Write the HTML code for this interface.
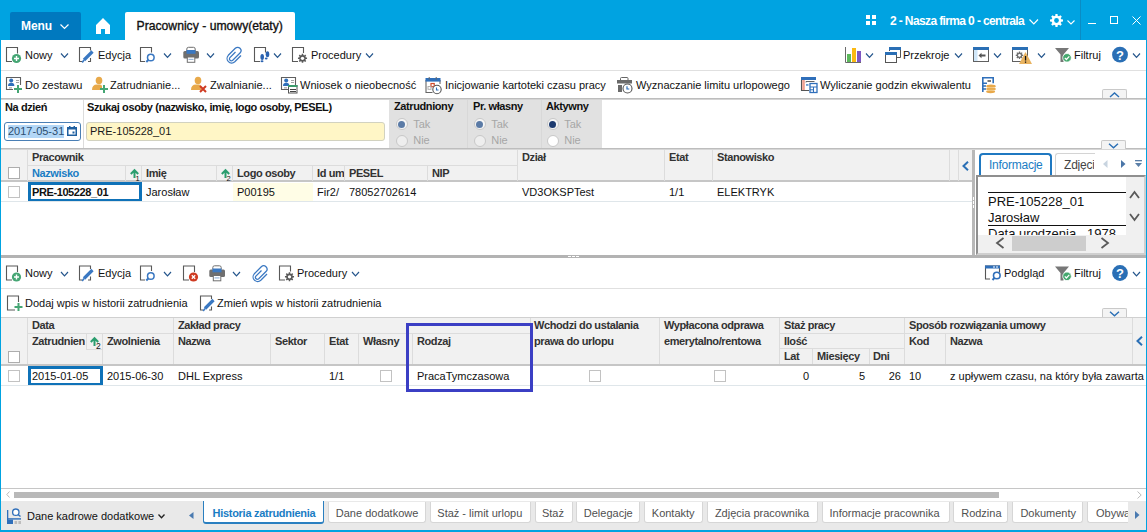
<!DOCTYPE html>
<html><head><meta charset="utf-8">
<style>
*{box-sizing:border-box;margin:0;padding:0}
html,body{width:1147px;height:532px;overflow:hidden;background:#fff}
body{position:relative;font-family:"Liberation Sans",sans-serif;font-size:11px;color:#111}
.a{position:absolute}
.t{position:absolute;white-space:nowrap;line-height:11px;font-size:11px}
.b{font-weight:bold;letter-spacing:-0.4px}
.bx{position:absolute}
svg{position:absolute;overflow:visible}
</style></head><body>
<!-- frame borders -->
<div class="a" style="left:0;top:0;width:1147px;height:40px;background:#00a3e1"></div>
<div class="a" style="left:0;top:40px;width:1px;height:492px;background:#00a3e1"></div>
<div class="a" style="left:1146px;top:40px;width:1px;height:492px;background:#00a3e1"></div>
<div class="a" style="left:0;top:530px;width:1147px;height:2px;background:#00a3e1"></div>

<!-- TOP BAR -->
<div class="a" style="left:10px;top:12px;width:71px;height:28px;background:#0079bf;border-radius:2px 2px 0 0"></div>
<span class="t b" style="left:21px;top:20px;color:#fff;font-size:12px;line-height:12px;letter-spacing:-0.1px">Menu</span>
<svg style="left:60px;top:24px" width="9" height="6"><path d="M0.5 0.5 L4.5 4.5 L8.5 0.5" fill="none" stroke="#fff" stroke-width="1.2"/></svg>
<svg style="left:96px;top:18px" width="14" height="16"><path d="M7 0 L14 7 L14 16 L9 16 L9 11 L5 11 L5 16 L0 16 L0 7 Z" fill="#fff"/></svg>
<div class="a" style="left:125px;top:12px;width:170px;height:28px;background:#fff;border-radius:2px 2px 0 0"></div>
<span class="t" style="left:136.5px;top:20px;color:#111;font-size:12.2px;line-height:12px;-webkit-text-stroke:0.35px #111">Pracownicy - umowy(etaty)</span>

<svg style="left:866px;top:15px" width="10" height="10"><rect x="0" y="0" width="4" height="4" fill="#fff"/><rect x="6" y="0" width="4" height="4" fill="#fff"/><rect x="0" y="6" width="4" height="4" fill="#fff"/><rect x="6" y="6" width="4" height="4" fill="#fff"/></svg>
<span class="t b" style="left:890px;top:15px;color:#fff;font-size:12px;line-height:12px;letter-spacing:-0.62px">2 - Nasza firma 0 - centrala</span>
<svg style="left:1029px;top:19px" width="10" height="6"><path d="M0.5 0.5 L4.8 4.8 L9 0.5" fill="none" stroke="#fff" stroke-width="1.2"/></svg>

<svg style="left:1067px;top:20px" width="8" height="5"><path d="M0.5 0.5 L4 4 L7.5 0.5" fill="none" stroke="#fff" stroke-width="1.1"/></svg>
<div class="a" style="left:1080px;top:0;width:1px;height:40px;background:#0a8cc4"></div>
<div class="a" style="left:1088px;top:23px;width:8px;height:1px;background:#fff"></div>
<div class="a" style="left:1110px;top:16px;width:8px;height:8px;border:1px solid #fff"></div>
<svg style="left:1132px;top:16px" width="9" height="9"><path d="M0.5 0.5 L8.5 8.5 M8.5 0.5 L0.5 8.5" stroke="#fff" stroke-width="1"/></svg>

<!-- TOOLBAR 1 -->
<div class="a" style="left:1px;top:70px;width:1145px;height:1px;background:#e0e0e0"></div>
<span class="t" style="left:25px;top:50px">Nowy</span>
<span class="t" style="left:98px;top:50px">Edycja</span>
<span class="t" style="left:311px;top:50px">Procedury</span>
<span class="t" style="left:903px;top:50px">Przekroje</span>
<span class="t" style="left:1074px;top:50px">Filtruj</span>

<!-- TOOLBAR 2 -->
<div class="a" style="left:1px;top:98px;width:1145px;height:1px;background:#bdbdbd"></div>
<div class="a" style="left:1px;top:99px;width:1145px;height:1px;background:#d4d4d4"></div>
<span class="t" style="left:25px;top:80px">Do zestawu</span>
<span class="t" style="left:110px;top:80px">Zatrudnianie...</span>
<span class="t" style="left:210px;top:80px">Zwalnianie...</span>
<span class="t" style="left:300px;top:80px">Wniosek o nieobecność</span>
<span class="t" style="left:445px;top:80px">Inicjowanie kartoteki czasu pracy</span>
<span class="t" style="left:636px;top:80px">Wyznaczanie limitu urlopowego</span>
<span class="t" style="left:820px;top:80px">Wyliczanie godzin ekwiwalentu</span>


<!-- FILTER PANEL -->
<div class="a" style="left:83px;top:100px;width:1px;height:48px;background:#dcdcdc"></div>
<span class="t b" style="left:5px;top:102px;color:#111">Na dzień</span>
<span class="t b" style="left:87px;top:102px;color:#111">Szukaj osoby (nazwisko, imię, logo osoby, PESEL)</span>
<div class="a" style="left:4px;top:122px;width:77px;height:19px;border:1px solid #4a7fb5;border-radius:3px;background:#fff"></div>
<div class="a" style="left:8px;top:125px;width:56px;height:13px;background:#b3d7f7"></div>
<span class="t" style="left:8px;top:126px;color:#2d4e70">2017-05-31</span>
<svg style="left:67px;top:126px" width="10" height="10"><rect x="0.75" y="1.75" width="8.5" height="7.5" fill="none" stroke="#1f5f9f" stroke-width="1.5"/><rect x="0" y="1" width="10" height="2.5" fill="#1f5f9f"/><rect x="2" y="0" width="1.5" height="2" fill="#1f5f9f"/><rect x="6.5" y="0" width="1.5" height="2" fill="#1f5f9f"/><rect x="5.5" y="5.5" width="2" height="2" fill="#1f5f9f"/></svg>
<div class="a" style="left:86px;top:122px;width:299px;height:19px;border:1px solid #d2d2c0;border-radius:3px;background:#fff6c6"></div>
<span class="t" style="left:90px;top:126px;color:#1a1a1a">PRE-105228_01</span>
<div class="a" style="left:389px;top:100px;width:213px;height:48px;background:#e1e1e1"></div>
<div class="a" style="left:467px;top:100px;width:1px;height:48px;background:#d8d8d8"></div>
<div class="a" style="left:541px;top:100px;width:1px;height:48px;background:#d8d8d8"></div>
<span class="t b" style="left:394px;top:101px;color:#111">Zatrudniony</span>
<span class="t b" style="left:473px;top:101px;color:#111">Pr. własny</span>
<span class="t b" style="left:546px;top:101px;color:#111">Aktywny</span>
<div class="a" style="left:395.5px;top:118px;width:12px;height:12px;border-radius:50%;border:1px solid #c8c8c8;background:#f6f6f6"></div><div class="a" style="left:398.0px;top:120.5px;width:7px;height:7px;border-radius:50%;background:#5b7ba6"></div><div class="a" style="left:395.5px;top:134.5px;width:12px;height:12px;border-radius:50%;border:1px solid #c8c8c8;background:#eeeeee"></div><span class="t" style="left:413.2px;top:118.5px;color:#a6a6a6">Tak</span><span class="t" style="left:413.2px;top:135px;color:#a6a6a6">Nie</span>
<div class="a" style="left:473.5px;top:118px;width:12px;height:12px;border-radius:50%;border:1px solid #c8c8c8;background:#f6f6f6"></div><div class="a" style="left:476.0px;top:120.5px;width:7px;height:7px;border-radius:50%;background:#5b7ba6"></div><div class="a" style="left:473.5px;top:134.5px;width:12px;height:12px;border-radius:50%;border:1px solid #c8c8c8;background:#eeeeee"></div><span class="t" style="left:491.2px;top:118.5px;color:#a6a6a6">Tak</span><span class="t" style="left:491.2px;top:135px;color:#a6a6a6">Nie</span>
<div class="a" style="left:546.5px;top:118px;width:12px;height:12px;border-radius:50%;border:1px solid #c8c8c8;background:#f6f6f6"></div><div class="a" style="left:549.0px;top:120.5px;width:7px;height:7px;border-radius:50%;background:#1d3b70"></div><div class="a" style="left:546.5px;top:134.5px;width:12px;height:12px;border-radius:50%;border:1px solid #c8c8c8;background:#fff"></div><span class="t" style="left:564.2px;top:118.5px;color:#a6a6a6">Tak</span><span class="t" style="left:564.2px;top:135px;color:#a6a6a6">Nie</span>
<div class="a" style="left:1px;top:148px;width:1145px;height:1px;background:#bdbdbd"></div>
<div class="a" style="left:1px;top:149px;width:1145px;height:1px;background:#d6d6d6"></div>

<!-- UPPER GRID HEADER -->
<div class="a" style="left:1px;top:150px;width:971px;height:30px;background:#f1f1f1"></div>
<div class="a" style="left:1px;top:180px;width:971px;height:2px;background:#c6c6c6"></div>
<div class="a" style="left:27px;top:165px;width:490px;height:1px;background:#dcdcdc"></div>
<div class="a" style="left:27px;top:150px;width:1px;height:31px;background:#dcdcdc"></div><div class="a" style="left:125px;top:166px;width:1px;height:15px;background:#dcdcdc"></div><div class="a" style="left:141px;top:166px;width:1px;height:15px;background:#dcdcdc"></div><div class="a" style="left:216px;top:166px;width:1px;height:15px;background:#dcdcdc"></div><div class="a" style="left:232px;top:166px;width:1px;height:15px;background:#dcdcdc"></div><div class="a" style="left:312px;top:166px;width:1px;height:15px;background:#dcdcdc"></div><div class="a" style="left:344px;top:166px;width:1px;height:15px;background:#dcdcdc"></div><div class="a" style="left:427px;top:166px;width:1px;height:15px;background:#dcdcdc"></div><div class="a" style="left:517px;top:150px;width:1px;height:31px;background:#dcdcdc"></div><div class="a" style="left:664px;top:150px;width:1px;height:31px;background:#dcdcdc"></div><div class="a" style="left:712px;top:150px;width:1px;height:31px;background:#dcdcdc"></div><div class="a" style="left:949px;top:150px;width:1px;height:31px;background:#dcdcdc"></div><div class="a" style="left:958px;top:150px;width:1px;height:31px;background:#dcdcdc"></div>
<div class="a" style="left:8px;top:167px;width:12px;height:12px;border:1px solid #adadad;background:#fff"></div>
<span class="t b" style="left:32px;top:152px;color:#333">Pracownik</span>
<span class="t b" style="left:32px;top:168px;color:#1a7dc4">Nazwisko</span>
<span class="t b" style="left:146px;top:168px;color:#333">Imię</span>
<span class="t b" style="left:237px;top:168px;color:#333">Logo osoby</span>
<span class="t b" style="left:317px;top:168px;color:#333;width:27px;overflow:hidden">Id umowy</span>
<span class="t b" style="left:349px;top:168px;color:#333">PESEL</span>
<span class="t b" style="left:432px;top:168px;color:#333">NIP</span>
<span class="t b" style="left:522px;top:152px;color:#333">Dział</span>
<span class="t b" style="left:669px;top:152px;color:#333">Etat</span>
<span class="t b" style="left:717px;top:152px;color:#333">Stanowisko</span>
<svg style="left:130px;top:169px" width="9" height="9"><path d="M4.5 9 V1.5 M0.8 5 L4.5 1.2 L8.2 5" fill="none" stroke="#2a9d6e" stroke-width="2"/></svg>
<span class="t" style="left:135.5px;top:175px;font-size:7.5px;line-height:7px;color:#111">1</span>
<svg style="left:221px;top:169px" width="9" height="9"><path d="M4.5 9 V1.5 M0.8 5 L4.5 1.2 L8.2 5" fill="none" stroke="#2a9d6e" stroke-width="2"/></svg>
<span class="t" style="left:226.5px;top:175px;font-size:7.5px;line-height:7px;color:#111">2</span>
<svg style="left:962px;top:161px" width="7" height="10"><path d="M6 0.8 L1.5 5 L6 9.2" fill="none" stroke="#2a6fb5" stroke-width="2"/></svg>

<!-- UPPER GRID ROW -->
<div class="a" style="left:233px;top:183px;width:80px;height:18px;background:#fffde6"></div>
<div class="a" style="left:1px;top:201px;width:971px;height:1px;background:#dfe6ea"></div>
<div class="a" style="left:8px;top:186px;width:12px;height:12px;border:1px solid #c2c2c2;background:#fff"></div>
<div class="a" style="left:28px;top:182px;width:114px;height:19px;border:3px solid #0f72b8;border-bottom-width:2px"></div>
<span class="t b" style="left:32px;top:187px;color:#111">PRE-105228_01</span>
<span class="t" style="left:146px;top:187px">Jarosław</span>
<span class="t" style="left:237px;top:187px">P00195</span>
<span class="t" style="left:317px;top:187px">Fir2/</span>
<span class="t" style="left:349px;top:187px">78052702614</span>
<span class="t" style="left:522px;top:187px">VD3OKSPTest</span>
<span class="t" style="left:669px;top:187px">1/1</span>
<span class="t" style="left:717px;top:187px">ELEKTRYK</span>

<!-- splitter vertical + right panel -->
<div class="a" style="left:972px;top:150px;width:3px;height:105px;background:#b8b8b8"></div><div class="a" style="left:973px;top:197px;width:1px;height:3px;background:#fff"></div><div class="a" style="left:973px;top:201px;width:1px;height:3px;background:#fff"></div><div class="a" style="left:973px;top:205px;width:1px;height:3px;background:#fff"></div>


<!-- RIGHT PANEL -->
<div class="a" style="left:976px;top:150px;width:170px;height:105px;background:#fff"></div>
<div class="a" style="left:979px;top:153px;width:73px;height:23px;border:2px solid #1f78c1;border-bottom:none;border-radius:4px 4px 0 0;background:#fff"></div>
<span class="t" style="left:989px;top:159px;color:#1a7dc4;font-size:12px;line-height:12px;letter-spacing:-0.25px">Informacje</span>
<div class="a" style="left:1055px;top:153px;width:40px;height:22px;border:1px solid #d4d4d4;border-bottom:none;border-right:none;border-radius:3px 0 0 0;background:#fff;overflow:hidden"></div>
<span class="t" style="left:1064px;top:159px;color:#444;font-size:12px;line-height:12px;width:30px;overflow:hidden;letter-spacing:-0.2px">Zdjęcia</span>
<svg style="left:1103px;top:160px" width="5" height="8"><path d="M4.5 0 L0 4 L4.5 8 Z" fill="#c8d4e0"/></svg>
<svg style="left:1120.5px;top:160px" width="5" height="8"><path d="M0 0 L4.5 4 L0 8 Z" fill="#4a76a8"/></svg>
<svg style="left:1135px;top:160px" width="8" height="8"><rect x="0" y="0" width="7" height="1.3" fill="#5a7fa8"/><path d="M0 3 L7 3 L3.5 7 Z" fill="#5a7fa8"/></svg>
<div class="a" style="left:976px;top:175px;width:170px;height:80px;border-top:2px solid #8f8f8f;border-left:2px solid #8f8f8f;border-right:2px solid #cfcfcf;border-bottom:2px solid #cfcfcf;background:#fff;overflow:hidden">
  <div class="a" style="left:10px;top:15px;width:138px;height:1px;background:#111"></div>
  <span class="t" style="left:10px;top:18px;font-size:13px;line-height:13px;color:#111">PRE-105228_01</span>
  <span class="t" style="left:10px;top:34px;font-size:13px;line-height:13px;color:#111">Jarosław</span>
  <div class="a" style="left:10px;top:48px;width:138px;height:1px;background:#111"></div>
  <span class="t" style="left:10px;top:50px;font-size:13px;line-height:13px;color:#111">Data urodzenia&nbsp;&nbsp;&nbsp;1978</span>
  <div class="a" style="left:148px;top:0;width:18px;height:58px;background:#f0f0f0"></div>
  <div class="a" style="left:0;top:58px;width:166px;height:18px;background:#f0f0f0"></div>
  <div class="a" style="left:34px;top:59px;width:74px;height:15px;background:#cdcdcd"></div>
</div>
<svg style="left:1129px;top:190px" width="11" height="9"><path d="M1 8 L5.5 2 L10 8" fill="none" stroke="#5a5a5a" stroke-width="1.8"/></svg>
<svg style="left:1129px;top:213px" width="11" height="9"><path d="M1 1 L5.5 7 L10 1" fill="none" stroke="#5a5a5a" stroke-width="1.8"/></svg>
<svg style="left:995px;top:237px" width="10" height="12"><path d="M8.5 1 L2 6 L8.5 11" fill="none" stroke="#5a5a5a" stroke-width="1.8"/></svg>
<svg style="left:1100px;top:237px" width="10" height="12"><path d="M1.5 1 L8 6 L1.5 11" fill="none" stroke="#5a5a5a" stroke-width="1.8"/></svg>
<div class="a" style="left:1101px;top:140px;width:25px;height:9px;border:1px solid #c9c9c9;border-bottom:none;border-radius:2px 2px 0 0;background:#f4f4f4"></div>
<svg style="left:1108px;top:143px" width="11" height="6"><path d="M1 0.8 L5.5 4.8 L10 0.8" fill="none" stroke="#2a6fb5" stroke-width="1.4"/></svg>
<div class="a" style="left:1102px;top:89px;width:25px;height:9px;border:1px solid #c9c9c9;border-bottom:none;border-radius:2px 2px 0 0;background:#f4f4f4"></div>
<svg style="left:1109px;top:92px" width="11" height="6"><path d="M1 5 L5.5 1 L10 5" fill="none" stroke="#2a6fb5" stroke-width="1.4"/></svg>

<!-- HORIZONTAL SPLITTER -->
<div class="a" style="left:1px;top:255px;width:1145px;height:3px;background:#b3b3b3"></div>
<div class="a" style="left:568px;top:256px;width:3px;height:1px;background:#fff"></div>
<div class="a" style="left:572px;top:256px;width:3px;height:1px;background:#fff"></div>
<div class="a" style="left:576px;top:256px;width:3px;height:1px;background:#fff"></div>

<!-- LOWER TOOLBAR 1 -->
<div class="a" style="left:1px;top:288px;width:1145px;height:1px;background:#e0e0e0"></div>
<span class="t" style="left:25px;top:268px">Nowy</span>
<span class="t" style="left:98px;top:268px">Edycja</span>
<span class="t" style="left:297px;top:268px">Procedury</span>
<span class="t" style="left:1004px;top:268px">Podgląd</span>
<span class="t" style="left:1074px;top:268px">Filtruj</span>

<!-- LOWER TOOLBAR 2 -->
<span class="t" style="left:25px;top:298px">Dodaj wpis w historii zatrudnienia</span>
<span class="t" style="left:217px;top:298px">Zmień wpis w historii zatrudnienia</span>
<div class="a" style="left:1102px;top:308px;width:25px;height:9px;border:1px solid #c9c9c9;border-bottom:none;border-radius:2px 2px 0 0;background:#f4f4f4"></div>
<svg style="left:1109px;top:311px" width="11" height="6"><path d="M1 0.8 L5.5 4.8 L10 0.8" fill="none" stroke="#2a6fb5" stroke-width="1.4"/></svg>

<!-- LOWER GRID HEADER -->
<div class="a" style="left:1px;top:317px;width:1145px;height:1px;background:#d0d0d0"></div>
<div class="a" style="left:1px;top:318px;width:1145px;height:46px;background:#f1f1f1"></div>
<div class="a" style="left:1px;top:364px;width:1145px;height:2px;background:#c6c6c6"></div>
<div class="a" style="left:27px;top:333px;width:503px;height:1px;background:#dcdcdc"></div><div class="a" style="left:779px;top:333px;width:353px;height:1px;background:#dcdcdc"></div><div class="a" style="left:779px;top:348px;width:125px;height:1px;background:#dcdcdc"></div><div class="a" style="left:27px;top:318px;width:1px;height:46px;background:#dcdcdc"></div><div class="a" style="left:102px;top:334px;width:1px;height:30px;background:#dcdcdc"></div><div class="a" style="left:173px;top:318px;width:1px;height:46px;background:#dcdcdc"></div><div class="a" style="left:270px;top:334px;width:1px;height:30px;background:#dcdcdc"></div><div class="a" style="left:324px;top:334px;width:1px;height:30px;background:#dcdcdc"></div><div class="a" style="left:358px;top:334px;width:1px;height:30px;background:#dcdcdc"></div><div class="a" style="left:412px;top:334px;width:1px;height:30px;background:#dcdcdc"></div><div class="a" style="left:530px;top:318px;width:1px;height:46px;background:#dcdcdc"></div><div class="a" style="left:659px;top:318px;width:1px;height:46px;background:#dcdcdc"></div><div class="a" style="left:779px;top:318px;width:1px;height:46px;background:#dcdcdc"></div><div class="a" style="left:812px;top:349px;width:1px;height:15px;background:#dcdcdc"></div><div class="a" style="left:869px;top:349px;width:1px;height:15px;background:#dcdcdc"></div><div class="a" style="left:904px;top:318px;width:1px;height:46px;background:#dcdcdc"></div><div class="a" style="left:945px;top:334px;width:1px;height:30px;background:#dcdcdc"></div><div class="a" style="left:1132px;top:318px;width:1px;height:46px;background:#dcdcdc"></div>
<div class="a" style="left:86px;top:334px;width:1px;height:15px;background:#dcdcdc"></div>
<div class="a" style="left:86px;top:349px;width:16px;height:1px;background:#dcdcdc"></div>
<div class="a" style="left:8px;top:351px;width:12px;height:12px;border:1px solid #adadad;background:#fff"></div>
<span class="t b" style="left:32px;top:320px;color:#333">Data</span>
<span class="t b" style="left:178px;top:320px;color:#333">Zakład pracy</span>
<span class="t b" style="left:534px;top:320px;color:#333">Wchodzi do ustalania</span>
<span class="t b" style="left:664px;top:320px;color:#333">Wypłacona odprawa</span>
<span class="t b" style="left:784px;top:320px;color:#333">Staż pracy</span>
<span class="t b" style="left:909px;top:320px;color:#333">Sposób rozwiązania umowy</span>
<span class="t b" style="left:32px;top:336px;color:#333;width:53px;overflow:hidden">Zatrudnienia</span>
<span class="t b" style="left:107px;top:336px;color:#333">Zwolnienia</span>
<span class="t b" style="left:178px;top:336px;color:#333">Nazwa</span>
<span class="t b" style="left:275px;top:336px;color:#333">Sektor</span>
<span class="t b" style="left:329px;top:336px;color:#333">Etat</span>
<span class="t b" style="left:363px;top:336px;color:#333">Własny</span>
<span class="t b" style="left:417px;top:336px;color:#333">Rodzaj</span>
<span class="t b" style="left:534px;top:336px;color:#333">prawa do urlopu</span>
<span class="t b" style="left:664px;top:336px;color:#333">emerytalno/rentowa</span>
<span class="t b" style="left:784px;top:336px;color:#333">Ilość</span>
<span class="t b" style="left:909px;top:336px;color:#333">Kod</span>
<span class="t b" style="left:950px;top:336px;color:#333">Nazwa</span>
<span class="t b" style="left:784px;top:351px;color:#333">Lat</span>
<span class="t b" style="left:817px;top:351px;color:#333">Miesięcy</span>
<span class="t b" style="left:873px;top:351px;color:#333">Dni</span>
<svg style="left:90px;top:337px" width="9" height="9"><path d="M4.5 9 V1.5 M0.8 5 L4.5 1.2 L8.2 5" fill="none" stroke="#2a9d6e" stroke-width="2"/></svg>
<span class="t" style="left:96px;top:342px;font-size:8.5px;line-height:8px;color:#111">2</span>
<svg style="left:1136px;top:336px" width="7" height="10"><path d="M6 0.8 L1.5 5 L6 9.2" fill="none" stroke="#2a6fb5" stroke-width="2"/></svg>

<!-- LOWER GRID ROW -->
<div class="a" style="left:1px;top:385px;width:1145px;height:1px;background:#dfe6ea"></div>
<div class="a" style="left:8px;top:370px;width:12px;height:12px;border:1px solid #c2c2c2;background:#fff"></div>
<div class="a" style="left:28px;top:366px;width:75px;height:19px;border:3px solid #0f72b8;border-bottom-width:2px"></div>
<span class="t" style="left:32px;top:371px">2015-01-05</span>
<span class="t" style="left:107px;top:371px">2015-06-30</span>
<span class="t" style="left:178px;top:371px">DHL Express</span>
<span class="t" style="left:329px;top:371px">1/1</span>
<div class="a" style="left:380px;top:370px;width:12px;height:12px;border:1px solid #c2c2c2;background:#fff"></div>
<span class="t" style="left:417px;top:371px">PracaTymczasowa</span>
<div class="a" style="left:589px;top:370px;width:12px;height:12px;border:1px solid #c2c2c2;background:#fff"></div>
<div class="a" style="left:714px;top:370px;width:12px;height:12px;border:1px solid #c2c2c2;background:#fff"></div>
<span class="t" style="left:770px;top:371px;width:39px;text-align:right">0</span>
<span class="t" style="left:826px;top:371px;width:39px;text-align:right">5</span>
<span class="t" style="left:861px;top:371px;width:40px;text-align:right">26</span>
<span class="t" style="left:909px;top:371px">10</span>
<span class="t" style="left:950px;top:371px">z upływem czasu, na który była zawarta</span>

<!-- annotation box -->
<div class="a" style="left:406px;top:323px;width:127px;height:69px;border:3px solid #3b3fc4"></div>

<!-- SCROLLBAR -->
<div class="a" style="left:1px;top:488px;width:1145px;height:1px;background:#c6c6c6"></div>
<div class="a" style="left:1px;top:489px;width:1145px;height:12px;background:#fff"></div>
<div class="a" style="left:14px;top:492px;width:985px;height:6px;background:#b9b9b9"></div>
<svg style="left:6px;top:491px" width="4" height="7"><path d="M3.5 0.5 L0.8 3.5 L3.5 6.5" fill="none" stroke="#bbb" stroke-width="1"/></svg>
<svg style="left:1137px;top:491px" width="5" height="8"><path d="M0.5 0.5 L4.2 4 L0.5 7.5" fill="none" stroke="#bbb" stroke-width="1"/></svg>

<!-- BOTTOM TAB BAR -->
<div class="a" style="left:1px;top:501px;width:1145px;height:29px;background:#e9e9e9"></div>
<span class="t" style="left:27px;top:511px;color:#111">Dane kadrowe dodatkowe</span>
<svg style="left:158px;top:514px" width="7" height="5"><path d="M0.5 0.5 L3.5 3.8 L6.5 0.5" fill="none" stroke="#222" stroke-width="1.3"/></svg>
<svg style="left:189px;top:512px" width="5" height="7"><path d="M4.5 0 L0 3.5 L4.5 7 Z" fill="#4a7ab0"/></svg>
<div class="a" style="left:203px;top:501px;width:121px;height:23px;background:#fff;border:1px solid #2a7fc0;border-top:none;border-bottom:2px solid #2a7fc0;border-radius:0 0 3px 3px"></div>
<span class="t b" style="left:212.5px;top:508px;color:#1a7dc4;letter-spacing:-0.28px">Historia zatrudnienia</span>
<div class="a" style="left:328px;top:502px;width:98px;height:21px;background:#fff;border:1px solid #d6d6d6;border-top:none;border-radius:0 0 3px 3px"></div><span class="t" style="left:335.8px;top:508px;color:#505050">Dane dodatkowe</span>
<div class="a" style="left:430px;top:502px;width:101px;height:21px;background:#fff;border:1px solid #d6d6d6;border-top:none;border-radius:0 0 3px 3px"></div><span class="t" style="left:437.3px;top:508px;color:#505050">Staż - limit urlopu</span>
<div class="a" style="left:535px;top:502px;width:38px;height:21px;background:#fff;border:1px solid #d6d6d6;border-top:none;border-radius:0 0 3px 3px"></div><span class="t" style="left:541.9px;top:508px;color:#505050">Staż</span>
<div class="a" style="left:576px;top:502px;width:64px;height:21px;background:#fff;border:1px solid #d6d6d6;border-top:none;border-radius:0 0 3px 3px"></div><span class="t" style="left:583.8px;top:508px;color:#505050">Delegacje</span>
<div class="a" style="left:644px;top:502px;width:59px;height:21px;background:#fff;border:1px solid #d6d6d6;border-top:none;border-radius:0 0 3px 3px"></div><span class="t" style="left:651.8px;top:508px;color:#505050">Kontakty</span>
<div class="a" style="left:707px;top:502px;width:111px;height:21px;background:#fff;border:1px solid #d6d6d6;border-top:none;border-radius:0 0 3px 3px"></div><span class="t" style="left:714.9px;top:508px;color:#505050">Zdjęcia pracownika</span>
<div class="a" style="left:822px;top:502px;width:128px;height:21px;background:#fff;border:1px solid #d6d6d6;border-top:none;border-radius:0 0 3px 3px"></div><span class="t" style="left:829.5px;top:508px;color:#505050">Informacje pracownika</span>
<div class="a" style="left:953px;top:502px;width:55px;height:21px;background:#fff;border:1px solid #d6d6d6;border-top:none;border-radius:0 0 3px 3px"></div><span class="t" style="left:961.2px;top:508px;color:#505050">Rodzina</span>
<div class="a" style="left:1012px;top:502px;width:71px;height:21px;background:#fff;border:1px solid #d6d6d6;border-top:none;border-radius:0 0 3px 3px"></div><span class="t" style="left:1020.4px;top:508px;color:#505050">Dokumenty</span>

<div class="a" style="left:1087px;top:502px;width:41px;height:21px;background:#fff;border:1px solid #d6d6d6;border-top:none;border-right:none;border-radius:0 0 0 3px;overflow:hidden"><span class="t" style="left:8px;top:6px;color:#505050">Obywatelstwo</span></div>
<div class="a" style="left:1128px;top:501px;width:18px;height:29px;background:#e9e9e9"></div>
<svg style="left:1135px;top:511px" width="5" height="8"><path d="M0 0 L4.5 4 L0 8 Z" fill="#4a7ab0"/></svg>

<!-- ICONS --><svg style="left:0;top:0;pointer-events:none" width="1147" height="532" viewBox="0 0 1147 532"><path d="M12 61.5 H6.5 V47.5 H17.5 V53.5" fill="none" stroke="#595959" stroke-width="1.1"/><circle cx="16.5" cy="58.5" r="4.6" fill="#45a674"/><path d="M16.5 56 V61 M14 58.5 H19" stroke="#fff" stroke-width="1.4"/><path d="M61 53.5 L64.5 57.5 L68 53.5" fill="none" stroke="#24558c" stroke-width="1.15"/><path d="M82 61.5 H79.5 V47.5 H90.5 V50.5 M90.5 58 V61.5 H88" fill="none" stroke="#595959" stroke-width="1.1"/><path d="M84 60 L92.5 51.5" stroke="#3a78c2" stroke-width="3.2"/><path d="M82.2 62.5 L84 60" stroke="#3a78c2" stroke-width="1.6"/><path d="M145 61.5 H140.5 V47.5 H151.5 V52.5" fill="none" stroke="#595959" stroke-width="1.1"/><circle cx="150.8" cy="57.5" r="3.3" fill="#fff" stroke="#3a78c2" stroke-width="1.5"/><path d="M148.5 59.8 L146.3 62" stroke="#3a78c2" stroke-width="2"/><path d="M164 53.5 L167.5 57.5 L171 53.5" fill="none" stroke="#24558c" stroke-width="1.15"/><rect x="183.3" y="51" width="15.7" height="7.5" rx="1.5" fill="#6f6f6f"/><path d="M186.8 51 V49 Q186.8 47.3 188.5 47.3 H193.5 Q195.2 47.3 195.2 49 V51" fill="#fff" stroke="#6f6f6f" stroke-width="1"/><rect x="186.5" y="50" width="9" height="3.8" fill="#3a78c2"/><rect x="187.3" y="57" width="7.5" height="5.3" fill="#fff" stroke="#6f6f6f" stroke-width="1"/><rect x="188.5" y="58.8" width="5" height="1.2" fill="#9ab8dc"/><path d="M207 53.5 L210.5 57.5 L214 53.5" fill="none" stroke="#24558c" stroke-width="1.15"/><path d="M235.5 52.0 L229.7 57.8 A2 2 0 0 0 232.5 60.5 L240.0 53.0 A3.3 3.3 0 0 0 235.3 48.3 L228.3 55.3 A4.6 4.6 0 0 0 234.8 61.8 L241.0 55.5" fill="none" stroke="#3a78c2" stroke-width="1.25"/><path d="M260 61.5 H254.5 V47.5 H265.5 V52.5" fill="none" stroke="#595959" stroke-width="1.1"/><ellipse cx="262.2" cy="57" rx="1.8" ry="3" fill="#2a62b0"/><ellipse cx="262" cy="61.3" rx="1.5" ry="1" fill="#2a62b0"/><ellipse cx="267.5" cy="54.3" rx="1.8" ry="3" fill="#2a62b0"/><ellipse cx="266.2" cy="58.6" rx="1.4" ry="1" fill="#2a62b0"/><path d="M274 53.5 L277.5 57.5 L281 53.5" fill="none" stroke="#24558c" stroke-width="1.15"/><path d="M298 61.5 H292.5 V47.5 H303.5 V53" fill="none" stroke="#595959" stroke-width="1.1"/><polygon points="305.80,57.48 307.04,57.54 307.04,59.06 305.80,59.12 305.42,60.06 306.24,60.97 305.17,62.04 304.26,61.22 303.32,61.60 303.26,62.84 301.74,62.84 301.68,61.60 300.74,61.22 299.83,62.04 298.76,60.97 299.58,60.06 299.20,59.12 297.96,59.06 297.96,57.54 299.20,57.48 299.58,56.54 298.76,55.63 299.83,54.56 300.74,55.38 301.68,55.00 301.74,53.76 303.26,53.76 303.32,55.00 304.26,55.38 305.17,54.56 306.24,55.63 305.42,56.54" fill="#595959"/><circle cx="302.5" cy="58.3" r="1.66" fill="#fff"/><path d="M366 53.5 L369.5 57.5 L373 53.5" fill="none" stroke="#24558c" stroke-width="1.15"/><path d="M845.5 47 V62.5 H861" fill="none" stroke="#6a6a6a" stroke-width="1"/><rect x="847" y="54" width="4" height="8" fill="#5cb85c"/><rect x="852" y="48" width="4" height="14" fill="#fbb913"/><rect x="857" y="51" width="4" height="11" fill="#7e57c2"/><path d="M866 53.5 L869.5 57.5 L873 53.5" fill="none" stroke="#24558c" stroke-width="1.15"/><path d="M889.5 51 V47.5 H900.5 V57.5 H897" fill="none" stroke="#555" stroke-width="1"/><rect x="889" y="47" width="12" height="3" fill="#2a6fb5"/><rect x="885.5" y="52.5" width="11" height="10" fill="#fff" stroke="#555" stroke-width="1"/><rect x="885" y="52" width="12" height="3" fill="#2a6fb5"/><path d="M955 53.5 L958.5 57.5 L962 53.5" fill="none" stroke="#24558c" stroke-width="1.15"/><rect x="973.5" y="47.5" width="15" height="14" fill="#fff" stroke="#606060" stroke-width="1"/><rect x="974" y="50" width="3.5" height="11" fill="#cfe6f8"/><rect x="973" y="47" width="16" height="3" fill="#2a6fb5"/><path d="M978.5 55.5 L981.5 52.8 V54.6 H985.5 V56.4 H981.5 V58.2 Z" fill="#555"/><path d="M994 53.5 L997.5 57.5 L1001 53.5" fill="none" stroke="#24558c" stroke-width="1.15"/><rect x="1012.5" y="47.5" width="15" height="14" fill="#fff" stroke="#606060" stroke-width="1"/><rect x="1012" y="47" width="16" height="3" fill="#2a6fb5"/><polygon points="1022.23,54.62 1023.25,54.68 1023.25,55.92 1022.23,55.98 1021.91,56.75 1022.59,57.51 1021.71,58.39 1020.95,57.71 1020.18,58.03 1020.12,59.05 1018.88,59.05 1018.82,58.03 1018.05,57.71 1017.29,58.39 1016.41,57.51 1017.09,56.75 1016.77,55.98 1015.75,55.92 1015.75,54.68 1016.77,54.62 1017.09,53.85 1016.41,53.09 1017.29,52.21 1018.05,52.89 1018.82,52.57 1018.88,51.55 1020.12,51.55 1020.18,52.57 1020.95,52.89 1021.71,52.21 1022.59,53.09 1021.91,53.85" fill="#707070"/><circle cx="1019.5" cy="55.3" r="1.37" fill="#fff"/><path d="M1025.5 52 L1032 64 H1019 Z" fill="#e9b360"/><rect x="1024.9" y="56" width="1.3" height="4.5" fill="#111"/><rect x="1024.9" y="61.5" width="1.3" height="1.3" fill="#111"/><path d="M1038 53.5 L1041.5 57.5 L1045 53.5" fill="none" stroke="#24558c" stroke-width="1.15"/><path d="M1055 48 H1069 L1063.5 54.5 V62 H1060.5 V54.5 Z" fill="#777"/><circle cx="1067" cy="57.8" r="4.3" fill="#45a86e" stroke="#fff" stroke-width="0.8"/><path d="M1064.8 57.8 L1066.4 59.5 L1069.3 56.3" fill="none" stroke="#fff" stroke-width="1.2"/><circle cx="1120" cy="54.7" r="7.9" fill="#2a6fb5"/><text x="1120" y="59.5" text-anchor="middle" font-family="Liberation Sans" font-weight="bold" font-size="13" fill="#fff">?</text><path d="M1133 53.5 L1136.5 57.5 L1140 53.5" fill="none" stroke="#24558c" stroke-width="1.15"/><path d="M13 89.5 H6.5 V77.5 H20.5 V85" fill="none" stroke="#5f5f5f" stroke-width="1.1"/><circle cx="11.2" cy="80.5" r="2" fill="#2f6fba"/><path d="M8 86 Q8 82.8 11.2 82.8 Q14.4 82.8 14.4 86 Z" fill="#2f6fba"/><rect x="16" y="80" width="3" height="0.9" fill="#999"/><rect x="16" y="82" width="3" height="0.9" fill="#999"/><rect x="9" y="87.5" width="3" height="0.8" fill="#777"/><path d="M18 85 V93 M14 89 H22" stroke="#45a674" stroke-width="2"/><ellipse cx="99" cy="80.5" rx="3.3" ry="3.8" fill="#e8a94a"/><path d="M92 90.0 Q92 84.5 97 84.5 H100 Q102 84.5 102 86.5 V90.0 Z" fill="#e8a94a"/><path d="M104 85 V93 M100 89 H108" stroke="#45a674" stroke-width="2"/><ellipse cx="198" cy="80.5" rx="3.3" ry="3.8" fill="#e8a94a"/><path d="M191 90.0 Q191 84.5 196 84.5 H199 Q201 84.5 201 86.5 V90.0 Z" fill="#e8a94a"/><path d="M200 86 L206 92 M206 86 L200 92" stroke="#cf3b22" stroke-width="2"/><path d="M288 89.5 H281.5 V77.5 H295.5 V85" fill="none" stroke="#5f5f5f" stroke-width="1.1"/><circle cx="286.2" cy="80.5" r="2" fill="#2f6fba"/><path d="M283 86 Q283 82.8 286.2 82.8 Q289.4 82.8 289.4 86 Z" fill="#2f6fba"/><rect x="291" y="80" width="3" height="0.9" fill="#999"/><rect x="291" y="82" width="3" height="0.9" fill="#999"/><rect x="284" y="87.5" width="3" height="0.8" fill="#777"/><rect x="288.5" y="85.5" width="8.5" height="7.5" fill="#fff" stroke="#555" stroke-width="1"/><rect x="288" y="85" width="9.5" height="2" fill="#3c9c6c"/><path d="M290 89.5 H296 M290 91.5 H296" stroke="#444" stroke-width="1"/><path d="M426.0 80 V92.5 H432.5" fill="none" stroke="#666" stroke-width="1.1"/><path d="M440.0 80 V84" fill="none" stroke="#666" stroke-width="1.1"/><rect x="425.5" y="78" width="15" height="3.6" fill="#2f6fba"/><rect x="428.7" y="77" width="1" height="2.5" fill="#666"/><rect x="435.7" y="77" width="1" height="2.5" fill="#666"/><rect x="431.0" y="83.5" width="3.2" height="3.2" fill="none" stroke="#d24a2a" stroke-width="1.2"/><rect x="428.0" y="86.5" width="3" height="2.8" fill="none" stroke="#aaa" stroke-width="0.9"/><circle cx="437.0" cy="89.5" r="4.2" fill="#fff" stroke="#555" stroke-width="1.1"/><path d="M436.5 87.5 V90 H438.5" fill="none" stroke="#2f6fba" stroke-width="1.1"/><path d="M620.5 80 V78.5 Q620.5 77.5 621.5 77.5 H627 Q628 77.5 628 78.5 V80" fill="none" stroke="#666" stroke-width="1"/><rect x="617" y="80" width="15" height="3.5" fill="#6a6a6a"/><rect x="618" y="85" width="4" height="7" fill="#6a6a6a"/><circle cx="627.5" cy="88.5" r="4.5" fill="#fff" stroke="#555" stroke-width="1.1"/><path d="M627 86.3 V89 H629.3" fill="none" stroke="#2f6fba" stroke-width="1.2"/><path d="M801.5 80 V90.5 H809" fill="none" stroke="#555" stroke-width="1.1"/><rect x="801" y="77" width="15" height="3" fill="#2f6fba"/><rect x="802.2" y="80" width="2.6" height="10" fill="#f0a090"/><path d="M806 82.5 V81.5 H814.5" fill="none" stroke="#555" stroke-width="0.9"/><rect x="806" y="84.3" width="2.5" height="1.3" fill="#2f6fba"/><rect x="810" y="83.5" width="7" height="9" fill="#fff" stroke="#2f6fba" stroke-width="1.3"/><rect x="811.5" y="85" width="4" height="1.5" fill="#fff"/><path d="M810 87 H817 M813.5 87 V92.5 M810 89.8 H813.5" stroke="#2f6fba" stroke-width="1"/><path d="M982.8 92 V77.8 H993.2 V83.3 M982.8 83.3 H987 M982.8 86 H986 M982.8 89 H986" fill="none" stroke="#2f6fba" stroke-width="1.6"/><rect x="987.5" y="80" width="3.5" height="2" fill="#777"/><ellipse cx="991" cy="86.3" rx="4.8" ry="1.7" fill="#e9a94a"/><ellipse cx="991" cy="89" rx="4.8" ry="1.7" fill="#e9a94a"/><ellipse cx="990.6" cy="91.6" rx="4.5" ry="1.7" fill="#e9a94a"/><path d="M987 87.6 H994.8 M987 90.3 H994.8" stroke="#f7e0b5" stroke-width="0.6"/><path d="M12 280.0 H6.5 V266.0 H17.5 V272.0" fill="none" stroke="#595959" stroke-width="1.1"/><circle cx="16.5" cy="277.0" r="4.6" fill="#45a674"/><path d="M16.5 274.5 V279.5 M14 277.0 H19" stroke="#fff" stroke-width="1.4"/><path d="M61 272 L64.5 276 L68 272" fill="none" stroke="#24558c" stroke-width="1.15"/><path d="M82 280.0 H79.5 V266.0 H90.5 V269.0 M90.5 276.5 V280.0 H88" fill="none" stroke="#595959" stroke-width="1.1"/><path d="M84 278.5 L92.5 270.0" stroke="#3a78c2" stroke-width="3.2"/><path d="M82.2 281.0 L84 278.5" stroke="#3a78c2" stroke-width="1.6"/><path d="M145 280.0 H140.5 V266.0 H151.5 V271.0" fill="none" stroke="#595959" stroke-width="1.1"/><circle cx="150.8" cy="276.0" r="3.3" fill="#fff" stroke="#3a78c2" stroke-width="1.5"/><path d="M148.5 278.3 L146.3 280.5" stroke="#3a78c2" stroke-width="2"/><path d="M164 272 L167.5 276 L171 272" fill="none" stroke="#24558c" stroke-width="1.15"/><path d="M189 280.0 H183.5 V266.0 H194.5 V272.0" fill="none" stroke="#595959" stroke-width="1.1"/><circle cx="193.5" cy="277.0" r="4.6" fill="#cf3b22"/><path d="M191.8 275.3 L195.2 278.7 M195.2 275.3 L191.8 278.7" stroke="#fff" stroke-width="1.3"/><rect x="209.3" y="269.5" width="15.7" height="7.5" rx="1.5" fill="#6f6f6f"/><path d="M212.8 269.5 V267.5 Q212.8 265.8 214.5 265.8 H219.5 Q221.2 265.8 221.2 267.5 V269.5" fill="#fff" stroke="#6f6f6f" stroke-width="1"/><rect x="212.5" y="268.5" width="9" height="3.8" fill="#3a78c2"/><rect x="213.3" y="275.5" width="7.5" height="5.3" fill="#fff" stroke="#6f6f6f" stroke-width="1"/><rect x="214.5" y="277.3" width="5" height="1.2" fill="#9ab8dc"/><path d="M233 272 L236.5 276 L240 272" fill="none" stroke="#24558c" stroke-width="1.15"/><path d="M261.5 270.5 L255.7 276.3 A2 2 0 0 0 258.5 279 L266.0 271.5 A3.3 3.3 0 0 0 261.3 266.8 L254.3 273.8 A4.6 4.6 0 0 0 260.8 280.3 L267.0 274" fill="none" stroke="#3a78c2" stroke-width="1.25"/><path d="M285 280.0 H279.5 V266.0 H290.5 V271.5" fill="none" stroke="#595959" stroke-width="1.1"/><polygon points="292.80,275.98 294.04,276.04 294.04,277.56 292.80,277.62 292.42,278.56 293.24,279.47 292.17,280.54 291.26,279.72 290.32,280.10 290.26,281.34 288.74,281.34 288.68,280.10 287.74,279.72 286.83,280.54 285.76,279.47 286.58,278.56 286.20,277.62 284.96,277.56 284.96,276.04 286.20,275.98 286.58,275.04 285.76,274.13 286.83,273.06 287.74,273.88 288.68,273.50 288.74,272.26 290.26,272.26 290.32,273.50 291.26,273.88 292.17,273.06 293.24,274.13 292.42,275.04" fill="#595959"/><circle cx="289.5" cy="276.8" r="1.66" fill="#fff"/><path d="M352 272 L355.5 276 L359 272" fill="none" stroke="#24558c" stroke-width="1.15"/><path d="M990 279.0 H985.5 V266.0 H999.5 V272.5" fill="none" stroke="#555" stroke-width="1.1"/><rect x="985" y="265.5" width="15" height="3" fill="#2f6fba"/><rect x="993" y="266.5" width="2" height="1" fill="#fff"/><rect x="996" y="266.5" width="2" height="1" fill="#fff"/><circle cx="996.8" cy="275.5" r="3.3" fill="#fff" stroke="#2f6fba" stroke-width="1.6"/><path d="M994.5 277.8 L992.5 280.0" stroke="#2f6fba" stroke-width="2"/><path d="M1055 266.5 H1069 L1063.5 273.0 V280.5 H1060.5 V273.0 Z" fill="#777"/><circle cx="1067" cy="276.3" r="4.3" fill="#45a86e" stroke="#fff" stroke-width="0.8"/><path d="M1064.8 276.3 L1066.4 278.0 L1069.3 274.8" fill="none" stroke="#fff" stroke-width="1.2"/><circle cx="1120" cy="273" r="7.9" fill="#2a6fb5"/><text x="1120" y="277.8" text-anchor="middle" font-family="Liberation Sans" font-weight="bold" font-size="13" fill="#fff">?</text><path d="M1133 272 L1136.5 276 L1140 272" fill="none" stroke="#24558c" stroke-width="1.15"/><path d="M15 310.0 H7.5 V296.0 H18.5 V302.0" fill="none" stroke="#595959" stroke-width="1.1"/><path d="M18.5 303.0 V311.0 M14.5 307.0 H22.5" stroke="#45a674" stroke-width="2"/><path d="M203 310.0 H200.5 V296.0 H211.5 V299.0 M211.5 306.5 V310.0 H209" fill="none" stroke="#595959" stroke-width="1.1"/><path d="M205 308.5 L213.5 300.0" stroke="#3a78c2" stroke-width="3.2"/><path d="M203.2 311.0 L205 308.5" stroke="#3a78c2" stroke-width="1.6"/><rect x="7" y="510" width="1.3" height="14" fill="#2f6fba"/><rect x="7" y="518.2" width="14" height="1.4" fill="#2f6fba"/><rect x="7" y="519.6" width="6" height="4.4" fill="#2f6fba"/><rect x="14.5" y="521" width="2.6" height="3" fill="#bdbdbd"/><rect x="18.4" y="521" width="2.6" height="3" fill="#bdbdbd"/><circle cx="15.8" cy="512.2" r="3.2" fill="#fff" stroke="#2f6fba" stroke-width="1.3"/><path d="M18 514.5 L20.5 516.5" stroke="#2f6fba" stroke-width="1.5"/><polygon points="1061.24,19.32 1063.01,19.42 1063.01,21.58 1061.24,21.68 1060.68,23.02 1061.87,24.34 1060.34,25.87 1059.02,24.68 1057.68,25.24 1057.58,27.01 1055.42,27.01 1055.32,25.24 1053.98,24.68 1052.66,25.87 1051.13,24.34 1052.32,23.02 1051.76,21.68 1049.99,21.58 1049.99,19.42 1051.76,19.32 1052.32,17.98 1051.13,16.66 1052.66,15.13 1053.98,16.32 1055.32,15.76 1055.42,13.99 1057.58,13.99 1057.68,15.76 1059.02,16.32 1060.34,15.13 1061.87,16.66 1060.68,17.98" fill="#fff"/><circle cx="1056.5" cy="20.5" r="2.38" fill="#00a3e1"/></svg><!-- /ICONS -->
</body></html>
